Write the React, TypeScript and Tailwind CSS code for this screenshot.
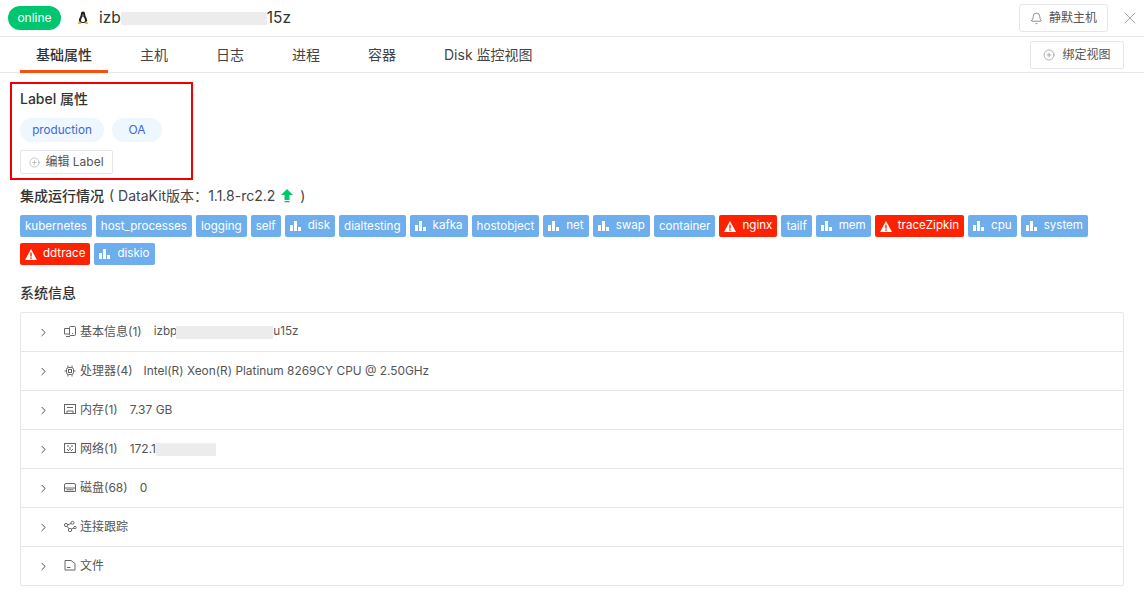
import { ChevronRight, Bell, X, CirclePlus } from "lucide-react";
import type { ReactNode } from "react";

const font = { fontFamily: '"Inter","Noto Sans CJK SC",sans-serif' };

function Bars() {
  return (
    <svg width="11" height="10" viewBox="0 0 11 10" className="mr-[7px] shrink-0" fill="#fff">
      <rect x="0" y="4" width="3" height="6" />
      <rect x="4" y="0" width="3" height="10" />
      <rect x="8" y="6" width="3" height="4" />
    </svg>
  );
}

function Warn() {
  return (
    <svg width="12" height="11" viewBox="0 0 12 11" className="mr-[6px] shrink-0">
      <path d="M6 0 L12 11 L0 11 Z" fill="#fff" />
      <rect x="5.3" y="3.6" width="1.4" height="4" fill="#ff2200" />
      <rect x="5.3" y="8.4" width="1.4" height="1.4" fill="#ff2200" />
    </svg>
  );
}

const tags: [string, "" | "bars" | "warn"][] = [
  ["kubernetes", ""], ["host_processes", ""], ["logging", ""], ["self", ""], ["disk", "bars"],
  ["dialtesting", ""], ["kafka", "bars"], ["hostobject", ""], ["net", "bars"], ["swap", "bars"],
  ["container", ""], ["nginx", "warn"], ["tailf", ""], ["mem", "bars"], ["traceZipkin", "warn"],
  ["cpu", "bars"], ["system", "bars"], ["ddtrace", "warn"], ["diskio", "bars"],
];

const S = { width: 14, height: 14, viewBox: "0 0 14 14", fill: "none", stroke: "#666", strokeWidth: 1 };

const rows: { icon: ReactNode; label: string; value?: ReactNode }[] = [
  {
    icon: <svg {...S}><rect x="6.5" y="1.5" width="6" height="9" rx="1" /><path d="M6 3.5H1.5v5.5H6M3 11.5h4M9 8.5h1" /></svg>,
    label: "基本信息(1)",
    value: <span className="flex items-center ml-[12px] text-[11.7px]">izbp<span className="w-[97px] h-[13px] -ml-px bg-[#ececec]" />u15z</span>,
  },
  {
    icon: <svg {...S}><rect x="3.5" y="3.5" width="7" height="7" rx="2" /><rect x="5.5" y="5.5" width="3" height="3" /><path d="M5 1.5v2M9 1.5v2M5 10.5v2M9 10.5v2M1.5 7h2M10.5 7h2" /></svg>,
    label: "处理器(4)",
    value: <span className="ml-[11px] text-[11.88px]">Intel(R) Xeon(R) Platinum 8269CY CPU @ 2.50GHz</span>,
  },
  {
    icon: <svg {...S}><rect x="1.5" y="1.5" width="11" height="9" /><path d="M4 4.5h6M4 10.5v-2.5h6v2.5" /></svg>,
    label: "内存(1)",
    value: <span className="ml-[12px]">7.37 GB</span>,
  },
  {
    icon: <svg {...S}><rect x="1.5" y="1.5" width="11" height="9" /><path d="M4 4h2M8 4h2M4 7l2 2M10 7l-2 2M7 5v3" /></svg>,
    label: "网络(1)",
    value: <span className="flex items-center ml-[12px]">172.1<span className="w-[60px] h-[13px] bg-[#ececec]" /></span>,
  },
  {
    icon: <svg {...S}><path d="M3 2.5h8a1.5 1.5 0 0 1 1.5 1.5v6.5h-11V4A1.5 1.5 0 0 1 3 2.5ZM1.5 7h11M3.5 8.8h7" /></svg>,
    label: "磁盘(68)",
    value: <span className="ml-[12px]">0</span>,
  },
  {
    icon: <svg {...S}><circle cx="3" cy="5" r="1.6" /><circle cx="9.5" cy="2.8" r="1.5" /><circle cx="7" cy="10" r="1.7" /><circle cx="12" cy="7.5" r="1.2" /><path d="M4.5 5l3.5-1.5M4 6.3l2 2.4M8.5 9l2.5-1" /></svg>,
    label: "连接跟踪",
  },
  {
    icon: <svg {...S}><path d="M2 1.5h6l4 3v6.5H2zM4 8.5h3.5" /></svg>,
    label: "文件",
  },
];

const tabs = ["基础属性", "主机", "日志", "进程", "容器", "Disk 监控视图"];

export default function App() {
  return (
    <div style={font} className="w-[1144px] h-[616px] bg-white overflow-hidden text-[#333]">
      <header className="h-[37px] border-b border-[#e4e6eb] flex items-center pl-2 pr-[4px]">
        <span className="w-[53px] h-6 rounded-full bg-[#00c66f] text-white text-xs flex items-center justify-center">online</span>
        <svg width="12" height="14" viewBox="0 0 12 14" className="ml-4">
          <path d="M6 0.5C4.2 0.5 3.8 2 3.8 3.5 3.8 5.5 2 7 1.8 9.5 1.7 11 3 12 6 12s4.3-1 4.2-2.5C10 7 8.2 5.5 8.2 3.5 8.2 2 7.8 0.5 6 0.5Z" fill="#222" />
          <path d="M6 5C4.8 6.5 4 8 4 9.5 4 10.5 5 11 6 11s2-.5 2-1.5C8 8 7.2 6.5 6 5Z" fill="#fff" />
          <path d="M0.5 12l2.5-2 1 3H1.5zM11.5 12l-2.5-2-1 3h2.5zM4.8 3.8h2.4L6 5z" fill="#f4b400" />
        </svg>
        <span className="ml-[10px] text-[15.5px] flex items-center text-[#333]">izb<span className="w-[146px] h-[13px] bg-[#ececec]" />15z</span>
        <button className="ml-auto w-[89px] h-[28px] rounded-[3px] border border-[#e4e6eb] text-xs flex items-center justify-center gap-[6px] text-[#555]">
          <Bell size={13} strokeWidth={1.2} color="#555" />静默主机
        </button>
        <X size={20} strokeWidth={1} color="#999" className="ml-3" />
      </header>

      <nav className="h-[36px] border-b border-[#e4e6eb] flex items-stretch pl-5 pr-5 text-sm">
        {tabs.map((t, i) => (
          <a key={t} className={`px-4 flex items-center mr-4 ${i === 0 ? "font-medium text-[#333] border-b-[3px] border-[#f4520b] pt-[3px] -mb-px" : "text-[#444]"}`}>{t}</a>
        ))}
        <button className="ml-auto self-center w-[94px] h-[28px] rounded-[2px] border border-[#e4e6eb] text-xs flex items-center justify-center gap-[7px] text-[#555]">
          <CirclePlus size={12} strokeWidth={1} color="#666" />绑定视图
        </button>
      </nav>

      <main className="pt-[9px] px-[10px]">
        <section className="w-[183px] h-[98px] border-2 border-[#f00000] pl-2 pt-[7px]">
          <h3 className="text-sm leading-[16px] font-medium text-[#333]">Label 属性</h3>
          <div className="flex gap-2 mt-[11px]">
            <span className="w-[84px] h-6 pt-px rounded-full bg-[#eef6fe] text-[#3b68d9] text-[11.7px] flex items-center justify-center">production</span>
            <span className="w-[50px] h-6 rounded-full bg-[#eef6fe] text-[#3b68d9] text-xs flex items-center justify-center">OA</span>
          </div>
          <button className="mt-2 w-[93px] h-6 rounded-[2px] border border-[#e4e6eb] text-xs flex items-center justify-center gap-[5px] text-[#555]">
            <CirclePlus size={11} strokeWidth={1} color="#888" />编辑 Label
          </button>
        </section>

        <section className="pl-[10px] pr-[30px]">
          <div className="mt-[8px] h-[16px] flex items-center text-sm text-[#444]">
            <span className="font-medium text-[#333]">集成运行情况</span>
            <span className="ml-[5px]">( DataKit版本：</span>
            <span>1.1.8-rc2.2</span>
            <svg width="12" height="14" viewBox="0 0 12 14" className="ml-[6px] mr-[7px]">
              <path d="M6 0 L12 6 H8.5 V11 H3.5 V6 H0 Z" fill="#00c66f" />
              <rect x="3.5" y="12" width="5" height="1.3" fill="#00c66f" />
            </svg>
            <span>)</span>
          </div>
          <div className="flex flex-wrap gap-x-1 gap-y-[6px] mt-[11px]">
            {tags.map(([n, k]) => (
              <span key={n} className={`h-[22px] px-[5px] rounded-[2px] text-[11.6px] text-white flex items-center ${k === "warn" ? "bg-[#ff2200]" : "bg-[#6eaeed]"} ${k ? "" : "pt-[2px]"}`}>
                {k === "bars" && <Bars />}
                {k === "warn" && <Warn />}
                {n}
              </span>
            ))}
          </div>
          <h3 className="mt-[20px] text-sm leading-4 font-medium text-[#333]">系统信息</h3>
        </section>

        <section className="ml-[10px] w-[1104px] mt-[11px] border border-[#e4e6eb] rounded-[2px] text-xs text-[#555]">
          {rows.map((r, i) => (
            <div key={r.label} className={`flex items-center pl-4 ${i < rows.length - 1 ? "h-[39px] border-b border-[#e4e6eb]" : "h-[38px]"}`}>
              <ChevronRight size={13} strokeWidth={1.6} color="#333" />
              <span className="ml-[13px] mr-[3px] flex">{r.icon}</span>
              <span>{r.label}</span>
              {r.value}
            </div>
          ))}
        </section>
      </main>
    </div>
  );
}
